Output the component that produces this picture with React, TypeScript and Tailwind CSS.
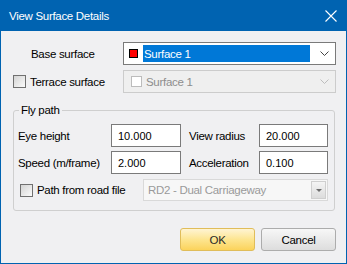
import React from "react";

const font = { fontFamily: '"Liberation Sans", Arial, sans-serif' };

function Chevron({ color }: { color: string }) {
  return (
    <svg width="9" height="5" viewBox="0 0 9 5" className="shrink-0">
      <path d="M0.5 0.5 L4.5 4.5 L8.5 0.5" fill="none" stroke={color} strokeWidth="1" />
    </svg>
  );
}

function CheckBox({ disabled }: { disabled?: boolean }) {
  return (
    <div
      className={
        disabled
          ? "w-[11px] h-[11px] border border-[#bcbcbc] bg-white shrink-0"
          : "w-[13px] h-[13px] border border-[#707070] bg-gradient-to-br from-[#d4d4d4] to-[#fbfbfb] shrink-0"
      }
    />
  );
}

function TextBox({ value, width }: { value: string; width: string }) {
  return (
    <div
      className={`${width} h-[23px] border border-[#7a7a7a] bg-white flex items-center pl-[6px] text-[11px] tracking-normal text-black`}
    >
      {value}
    </div>
  );
}

export default function App() {
  return (
    <div
      className="w-[347px] h-[264px] flex flex-col bg-[#0063b1] text-[11.5px] tracking-[-0.3px] leading-[16px] whitespace-nowrap text-black"
      style={font}
    >
      {/* title bar */}
      <div className="h-[31px] shrink-0 flex items-center justify-between pl-[9px] pr-[10px] text-white">
        <span>View Surface Details</span>
        <svg width="12" height="12" viewBox="0 0 12 12">
          <path d="M0.5 0.5 L11.5 11.5 M11.5 0.5 L0.5 11.5" stroke="white" strokeWidth="1.1" />
        </svg>
      </div>

      <div className="flex-1 mx-px mb-px bg-[#f0f0f2] flex flex-col">
        {/* base surface */}
        <div className="mt-[11px] flex items-center h-[23px]">
          <div className="w-[122px] pl-[30px]">Base surface</div>
          <div className="w-[213px] h-[23px] border border-[#7a7a7a] bg-white flex items-center pl-[5px] pr-[6px]">
            <div className="w-[9px] h-[9px] bg-[#ff0000] border border-black shrink-0" />
            <div className="ml-[5px] h-[17px] flex-1 bg-[#0078d7] text-white flex items-center pl-px">
              Surface 1
            </div>
            <div className="w-[19px] flex justify-end">
              <Chevron color="#444" />
            </div>
          </div>
        </div>

        {/* terrace surface */}
        <div className="mt-[5px] flex items-center h-[23px]">
          <div className="w-[122px] pl-[12px] flex items-center">
            <CheckBox />
            <span className="ml-[4px]">Terrace surface</span>
          </div>
          <div className="w-[213px] h-[23px] border border-[#cccccc] bg-[#efefef] flex items-center pl-[7px] pr-[6px] text-[#8d8d8d]">
            <CheckBox disabled />
            <span className="ml-[4px] flex-1">Surface 1</span>
            <Chevron color="#bdbdbd" />
          </div>
        </div>

        {/* fly path group */}
        <fieldset className="mt-[9px] ml-[12px] w-[322px] border border-[#cfcfcf] rounded-[3px] px-0 pb-[9px] pt-[6px]">
          <legend className="ml-[5px] px-[2px]">Fly path</legend>
          <div className="flex items-center h-[23px]">
            <div className="w-[97px] pl-[4px]">Eye height</div>
            <TextBox value="10.000" width="w-[70px]" />
            <div className="w-[78px] pl-[8px]">View radius</div>
            <TextBox value="20.000" width="w-[69px]" />
          </div>
          <div className="mt-[4px] flex items-center h-[23px]">
            <div className="w-[97px] pl-[4px]">Speed (m/frame)</div>
            <TextBox value="2.000" width="w-[70px]" />
            <div className="w-[78px] pl-[8px]">Acceleration</div>
            <TextBox value="0.100" width="w-[69px]" />
          </div>
          <div className="mt-[5px] flex items-center h-[22px]">
            <div className="w-[129px] pl-[6px] flex items-center">
              <CheckBox />
              <span className="ml-[4px]">Path from road file</span>
            </div>
            <div className="w-[185px] h-[22px] border border-[#d9d9d9] bg-[#f7f7f7] flex items-center pl-[4px] pr-px text-[#9a9a9a]">
              <span className="flex-1">RD2 - Dual Carriageway</span>
              <div className="w-[15px] h-[18px] border border-[#cfcfcf] bg-gradient-to-b from-[#f4f4f4] to-[#dcdcdc] flex items-center justify-center">
                <div className="w-0 h-0 border-l-[3px] border-r-[3px] border-t-[3px] border-l-transparent border-r-transparent border-t-[#6d6d6d]" />
              </div>
            </div>
          </div>
        </fieldset>

        {/* buttons */}
        <div className="mt-[17px] flex justify-end gap-[6px] pr-[10px]">
          <button className="w-[75px] h-[23px] border border-[#e0bd5a] rounded-[3px] bg-gradient-to-b from-[#fff4d2] via-[#fde58f] to-[#fbd35a] text-[#2a2a2a]">
            OK
          </button>
          <button className="w-[75px] h-[23px] border border-[#acacac] rounded-[3px] bg-gradient-to-b from-[#f7f7f7] to-[#dddddd] text-black">
            Cancel
          </button>
        </div>
      </div>
    </div>
  );
}
